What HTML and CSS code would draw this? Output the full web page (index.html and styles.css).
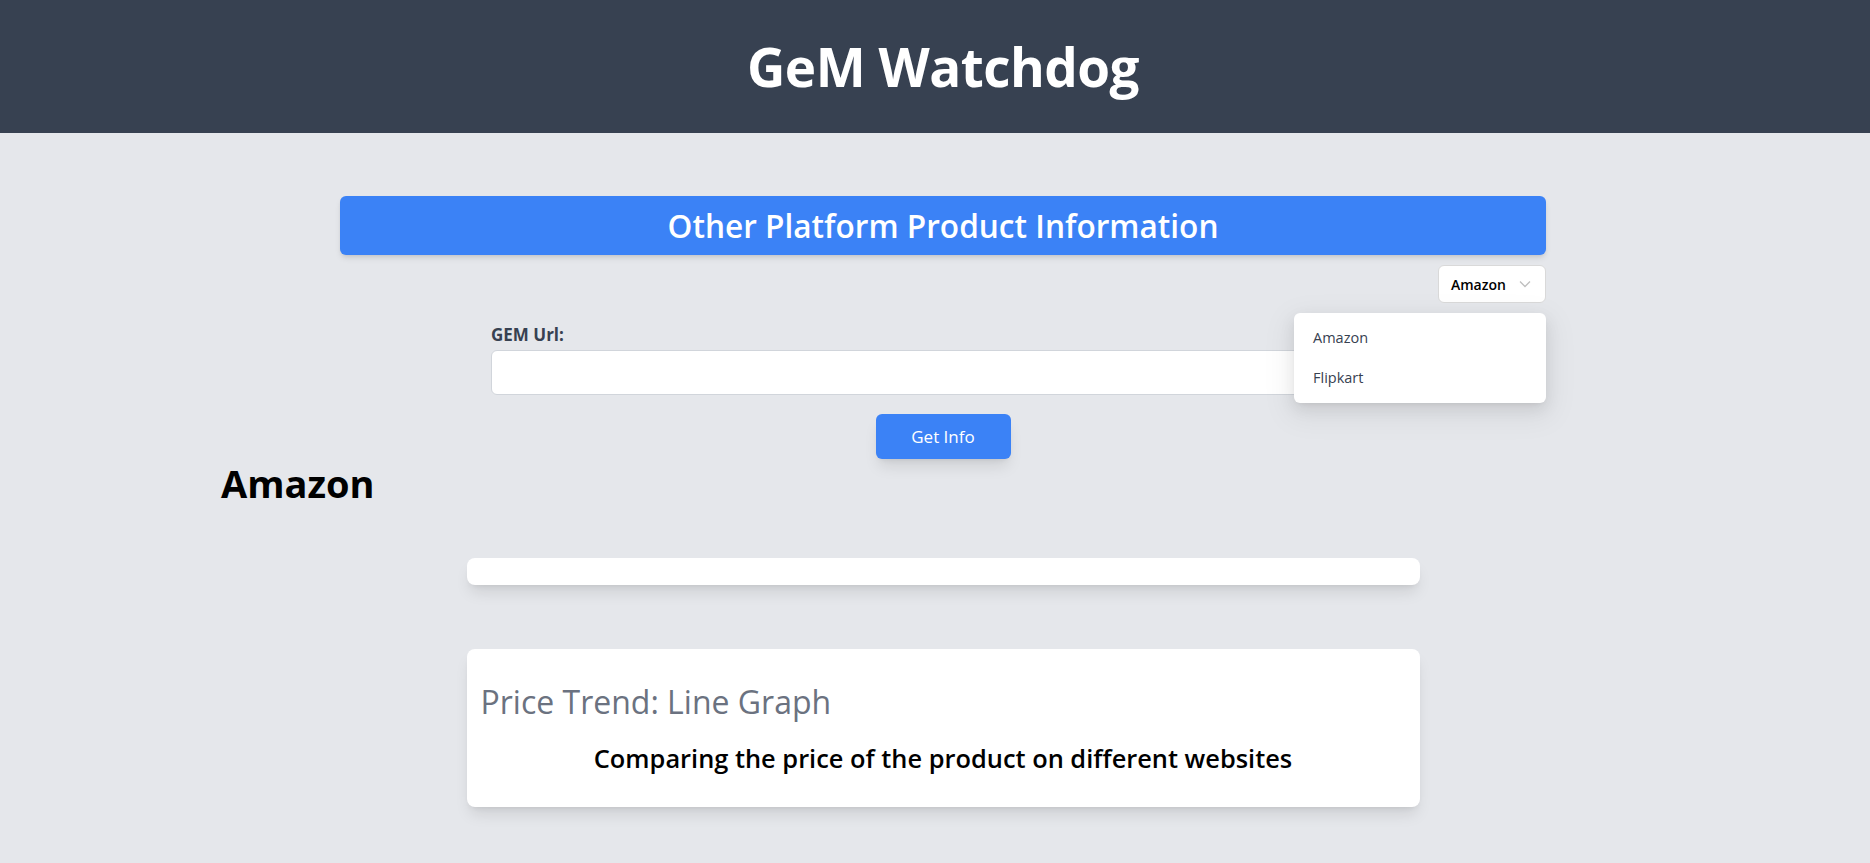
FILE: index.html
```html
<!DOCTYPE html>
<html lang="en">
<head>
    <meta charset="UTF-8">
    <meta name="viewport" content="width=device-width, initial-scale=1.0">
    <title>GeM Watchdog</title>
    <link rel="stylesheet" href="styles.css">
</head>
<body>
    <div class="header">
        <h1>GeM Watchdog</h1>
    </div>
    <div class="main">
        <div class="platform">
            <div class="platform-bar">Other Platform Product Information</div>
            <div class="select-row">
                <div class="select">
                    <span>Amazon</span>
                    <svg class="chevron" width="12" height="8" viewBox="0 0 12 8">
                        <path d="M1 1.5 L6 6.5 L11 1.5" fill="none" stroke="#bfbfbf" stroke-width="1.3"/>
                    </svg>
                </div>
            </div>
            <div class="menu">
                <div class="menu-item">Amazon</div>
                <div class="menu-item">Flipkart</div>
            </div>
            <div class="form-group">
                <label for="gem-url">GEM Url:</label>
                <input type="text" id="gem-url">
            </div>
            <div class="actions">
                <button>Get Info</button>
            </div>
        </div>
        <h2 class="site-title">Amazon</h2>
        <div class="card card-empty"></div>
        <div class="card card-chart">
            <h3>Price Trend: Line Graph</h3>
            <p>Comparing the price of the product on different websites</p>
        </div>
    </div>
</body>
</html>
```

FILE: styles.css
```css
html, body {
    margin: 0;
    padding: 0;
    font-family: 'Open Sans', 'Noto Sans', sans-serif;
    background-color: #e5e7eb;
    color: #000;
}
.header {
    height: 133px;
    background-color: #374151;
    display: flex;
    align-items: center;
    justify-content: center;
    padding-left: 16px;
}
.header h1 {
    margin: 0;
    color: #fff;
    font-size: 53px;
    font-weight: 700;
    letter-spacing: -0.5px;
}
.main {
    padding: 63px 0 60px 16px;
}
.platform {
    width: 1206px;
    margin: 0 auto;
    position: relative;
}
.platform-bar {
    height: 59px;
    line-height: 59px;
    background-color: #3b82f6;
    color: #fff;
    text-align: center;
    font-size: 31.6px;
    font-weight: 600;
    border-radius: 6px;
    box-shadow: 0 4px 6px -1px rgba(0, 0, 0, 0.1), 0 2px 4px -2px rgba(0, 0, 0, 0.1);
}
.select-row {
    display: flex;
    justify-content: flex-end;
    margin-top: 10px;
}
.select {
    width: 108px;
    height: 38px;
    box-sizing: border-box;
    background-color: #fff;
    border: 1px solid #d9d9d9;
    border-radius: 6px;
    display: flex;
    align-items: center;
    padding: 0 14px 0 12px;
    font-size: 14px;
    font-weight: 600;
    justify-content: space-between;
}
.menu {
    position: absolute;
    top: 117px;
    right: 0;
    width: 252px;
    padding: 5px 0;
    background-color: #fff;
    border-radius: 6px;
    box-shadow: 0 6px 16px 0 rgba(0, 0, 0, 0.08), 0 3px 6px -4px rgba(0, 0, 0, 0.12), 0 9px 28px 8px rgba(0, 0, 0, 0.05);
    z-index: 10;
}
.menu-item {
    height: 40px;
    line-height: 40px;
    padding: 0 19px;
    font-size: 14.5px;
    color: #374151;
}
.form-group {
    width: 904px;
    margin: 20px auto 0;
}
.form-group label {
    display: block;
    font-size: 17px;
    font-weight: 700;
    color: #374151;
    line-height: 24px;
    margin-bottom: 3px;
}
.form-group input {
    display: block;
    width: 100%;
    height: 45px;
    box-sizing: border-box;
    border: 1px solid #d1d5db;
    border-radius: 6px;
    background-color: #fff;
}
.actions {
    display: flex;
    justify-content: center;
    margin-top: 19px;
}
.actions button {
    width: 135px;
    height: 45px;
    border: none;
    border-radius: 6px;
    background-color: #3b82f6;
    color: #fff;
    font-family: inherit;
    font-size: 17px;
    box-shadow: 0 10px 15px -3px rgba(0, 0, 0, 0.1), 0 4px 6px -4px rgba(0, 0, 0, 0.1);
}
.site-title {
    margin: 0 0 0 205px;
    font-size: 38px;
    font-weight: 700;
    line-height: 48px;
}
.card {
    width: 953px;
    margin: 0 auto;
    background-color: #fff;
    border-radius: 8px;
    box-shadow: 0 10px 15px -3px rgba(0, 0, 0, 0.1), 0 4px 6px -4px rgba(0, 0, 0, 0.1);
}
.card-empty {
    height: 27px;
    margin-top: 51px;
}
.card-chart {
    margin-top: 64px;
    padding: 33px 14px 0;
    box-sizing: border-box;
    height: 158px;
}
.card-chart h3 {
    margin: 0;
    font-size: 32px;
    font-weight: 400;
    color: #6b7280;
    line-height: 40px;
}
.card-chart p {
    margin: 20px 0 0;
    text-align: center;
    font-size: 25.4px;
    font-weight: 600;
    line-height: 32px;
}
```
